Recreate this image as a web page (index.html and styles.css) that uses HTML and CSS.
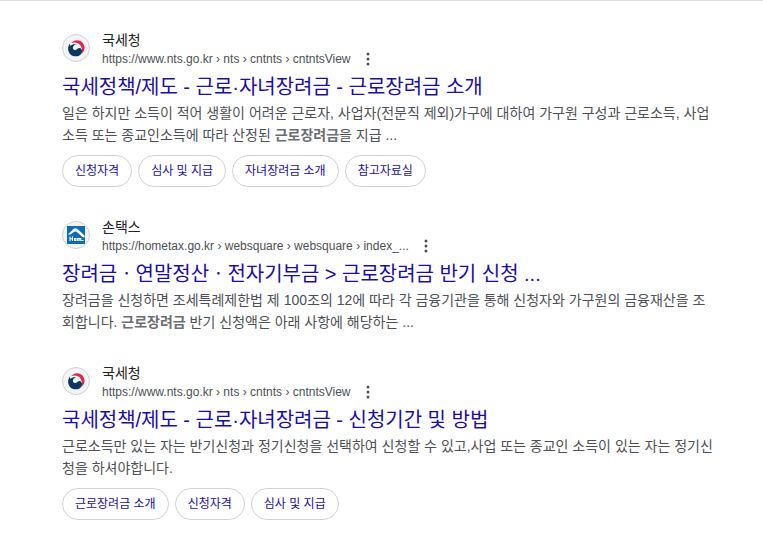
FILE: index.html
```html
<!DOCTYPE html>
<html lang="ko">
<head>
<meta charset="utf-8">
<title>검색결과</title>
<link rel="stylesheet" href="styles.css">
</head>
<body>
<svg width="0" height="0" class="defs">
  <symbol id="gov" viewBox="0 0 18 18">
    <path d="M4.200 4A7.600 7.600 0 1 1 14.800 14.800C15.800 11 14.500 6 11 4.300C9 3.300 6.500 3 4.200 4Z" fill="#e4254b"/>
    <path d="M3.200 4.300C-.8 8.500 1 17.300 8.800 17.300C13 17.300 15.500 14.500 15 11.500C14.500 8.800 11.800 8.300 10.300 10C9 11.500 6.300 11.300 5.900 9.200C5.600 7.500 7 6 8.900 5.500C6.800 4.800 4.500 5.500 3.600 7C3 6.200 2.900 5 3.200 4.300Z" fill="#0c3763"/>
  </symbol>
  <symbol id="home" viewBox="0 0 18 18">
    <path d="M0 0H18V18H0Z" fill="#0c6cba"/>
    <path d="M.8 8.500L6.500 3Q8.500 1.500 10.500 3L17.500 9.500V11.800L15.500 11L9.500 5.800Q8 5 6.800 6L3.500 8.500Z" fill="#fff"/>
    <path d="M3 10.500V15M5.500 10.500V15M3 12.800H5.500M7.500 12.500H9V14.500H7.500ZM10.700 15V12.500H12.200V15M12.200 12.500H13.700V15M14.500 14.500H16.500" fill="none" stroke="#fff" stroke-width="1.100"/>
  </symbol>
  <symbol id="dots" viewBox="0 0 4 14">
    <circle cx="2" cy="2" r="1.500"/><circle cx="2" cy="7" r="1.500"/><circle cx="2" cy="12" r="1.500"/>
  </symbol>
</svg>
<main class="results">
  <article class="result">
    <header class="site">
      <span class="favicon"><svg><use href="#gov"/></svg></span>
      <div class="source">
        <div class="name">국세청</div>
        <div class="url"><cite>https://www.nts.go.kr › nts › cntnts › cntntsView</cite><svg class="more"><use href="#dots"/></svg></div>
      </div>
    </header>
    <h3>국세정책/제도 - 근로·자녀장려금 - 근로장려금 소개</h3>
    <p><span>일은 하지만 소득이 적어 생활이 어려운 근로자, 사업자(전문직 제외)가구에 대하여 가구원 구성과 근로소득, 사업</span><span>소득 또는 종교인소득에 따라 산정된 <em>근로장려금</em>을 지급 ...</span></p>
    <nav class="chips"><a>신청자격</a><a>심사 및 지급</a><a>자녀장려금 소개</a><a>참고자료실</a></nav>
  </article>
  <article class="result">
    <header class="site">
      <span class="favicon"><svg><use href="#home"/></svg></span>
      <div class="source">
        <div class="name">손택스</div>
        <div class="url"><cite>https://hometax.go.kr › websquare › websquare › index_...</cite><svg class="more"><use href="#dots"/></svg></div>
      </div>
    </header>
    <h3>장려금ㆍ연말정산ㆍ전자기부금 &gt; 근로장려금 반기 신청 ...</h3>
    <p><span>장려금을 신청하면 조세특례제한법 제 100조의 12에 따라 각 금융기관을 통해 신청자와 가구원의 금융재산을 조</span><span>회합니다. <em>근로장려금</em> 반기 신청액은 아래 사항에 해당하는 ...</span></p>
  </article>
  <article class="result">
    <header class="site">
      <span class="favicon"><svg><use href="#gov"/></svg></span>
      <div class="source">
        <div class="name">국세청</div>
        <div class="url"><cite>https://www.nts.go.kr › nts › cntnts › cntntsView</cite><svg class="more"><use href="#dots"/></svg></div>
      </div>
    </header>
    <h3>국세정책/제도 - 근로·자녀장려금 - 신청기간 및 방법</h3>
    <p><span>근로소득만 있는 자는 반기신청과 정기신청을 선택하여 신청할 수 있고,사업 또는 종교인 소득이 있는 자는 정기신</span><span>청을 하셔야합니다.</span></p>
    <nav class="chips"><a>근로장려금 소개</a><a>신청자격</a><a>심사 및 지급</a></nav>
  </article>
</main>
</body>
</html>
```
FILE: styles.css
```css
* { box-sizing: border-box; }
body {
  margin: 0;
  height: 535px;
  overflow: hidden;
  background: #fff;
  border-top: 1px solid #dadce0;
  font-family: "Liberation Sans", "Noto Sans CJK KR", sans-serif;
  color: #4d5156;
}
.defs { display: block; }
.results { padding: 27px 0 0 62px; }
.result { margin-bottom: 28px; }
.site { display: flex; align-items: center; gap: 12px; height: 40px; }
.source { padding-top: 2px; }
.favicon {
  display: flex;
  align-items: center;
  justify-content: center;
  width: 28px;
  height: 28px;
  border: 1px solid #d2d2d5;
  border-radius: 50%;
  background: #f3f4f6;
}
.favicon svg { width: 18px; height: 18px; }
.name { font-size: 14px; line-height: 20px; color: #202124; }
.url { display: flex; align-items: center; height: 18px; font-size: 12px; line-height: 18px; }
cite { font-style: normal; white-space: nowrap; }
.more { width: 4px; height: 14px; margin-left: 15px; fill: #4d5156; }
h3 {
  margin: 0;
  height: 34px;
  font-size: 20px;
  font-weight: 400;
  line-height: 38px;
  letter-spacing: -0.02px;
  white-space: nowrap;
  color: #1a0dab;
}
p { margin: 0; font-size: 14px; line-height: 22px; }
p span { display: block; white-space: nowrap; }
em { font-style: normal; font-weight: 700; color: #6b6f74; }
.chips { display: flex; gap: 6px; margin-top: 9px; }
.chips a {
  height: 32px;
  padding: 0 12px;
  border: 1px solid #d2d2d2;
  border-radius: 16px;
  font-size: 12px;
  line-height: 30px;
  color: #1a0dab;
}
```
